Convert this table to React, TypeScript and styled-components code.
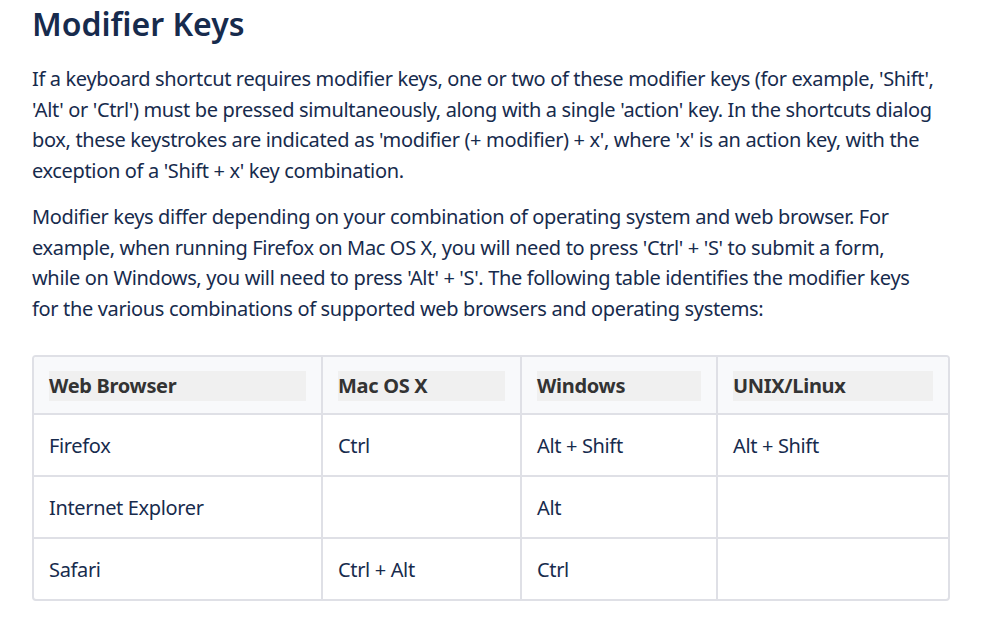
import React from "react";
import styled, { createGlobalStyle } from "styled-components";

const Global = createGlobalStyle`
  html, body { margin: 0; padding: 0; background: #ffffff; }
  body { font-family: "Noto Sans", "Open Sans", sans-serif; color: #172b4d; }
`;

const Page = styled.main`
  width: 918px;
  padding: 0 32px;
  box-sizing: content-box;
`;

const Title = styled.h1`
  margin: 0;
  padding-top: 1px;
  font-size: 32px;
  line-height: 46px;
  font-weight: 600;
  color: #172b4d;
  letter-spacing: 0;
`;

const Para = styled.p`
  margin: 17px 0 0;
  font-size: 20px;
  line-height: 30.5px;
  white-space: nowrap;
  letter-spacing: -0.35px;
  & + & { margin-top: 16px; }
`;

const TableWrap = styled.div`
  margin-top: 31px;
  border: 2px solid #dfe0e6;
  border-radius: 4px;
  overflow: hidden;
`;

const Table = styled.table`
  width: 100%;
  border-collapse: separate;
  border-spacing: 0;
  table-layout: fixed;
  font-size: 20px;
  line-height: 30px;
`;

const HeadCell = styled.th<{ $w?: number }>`
  ${(p) => (p.$w ? `width: ${p.$w}px;` : "")}
  background: #f8f9fb;
  padding: 14px 15px 12px;
  text-align: left;
  border-right: 2px solid #dfe0e6;
  border-bottom: 2px solid #dfe0e6;
  &:last-child { border-right: none; }
`;

const HeadLabel = styled.span`
  display: block;
  background: #f0f0f0;
  color: #333333;
  font-weight: 700;
  letter-spacing: -0.3px;
`;

const Cell = styled.td`
  padding: 16px 15px 14px;
  border-right: 2px solid #dfe0e6;
  border-bottom: 2px solid #dfe0e6;
  color: #172b4d;
  height: 30px;
  letter-spacing: -0.35px;
  &:last-child { border-right: none; }
  tr:last-child > & { border-bottom: none; }
`;

const cols = [
  { label: "Web Browser", w: 289 - 32 },
  { label: "Mac OS X", w: 199 - 32 },
  { label: "Windows", w: 196 - 32 },
  { label: "UNIX/Linux" },
];

const rows = [
  ["Firefox", "Ctrl", "Alt + Shift", "Alt + Shift"],
  ["Internet Explorer", "", "Alt", ""],
  ["Safari", "Ctrl + Alt", "Ctrl", ""],
];

export default function App() {
  return (
    <>
      <Global />
      <Page>
        <Title>Modifier Keys</Title>
        <Para>
          If a keyboard shortcut requires modifier keys, one or two of these modifier keys (for example, 'Shift',
          <br />
          'Alt' or 'Ctrl') must be pressed simultaneously, along with a single 'action' key. In the shortcuts dialog
          <br />
          box, these keystrokes are indicated as 'modifier (+ modifier) + x', where 'x' is an action key, with the
          <br />
          exception of a 'Shift + x' key combination.
        </Para>
        <Para>
          Modifier keys differ depending on your combination of operating system and web browser. For
          <br />
          example, when running Firefox on Mac OS X, you will need to press 'Ctrl' + 'S' to submit a form,
          <br />
          while on Windows, you will need to press 'Alt' + 'S'. The following table identifies the modifier keys
          <br />
          for the various combinations of supported web browsers and operating systems:
        </Para>
        <TableWrap>
          <Table>
            <thead>
              <tr>
                {cols.map((c) => (
                  <HeadCell key={c.label} $w={c.w}>
                    <HeadLabel>{c.label}</HeadLabel>
                  </HeadCell>
                ))}
              </tr>
            </thead>
            <tbody>
              {rows.map((r, i) => (
                <tr key={i}>
                  {r.map((v, j) => (
                    <Cell key={j}>{v}</Cell>
                  ))}
                </tr>
              ))}
            </tbody>
          </Table>
        </TableWrap>
      </Page>
    </>
  );
}
